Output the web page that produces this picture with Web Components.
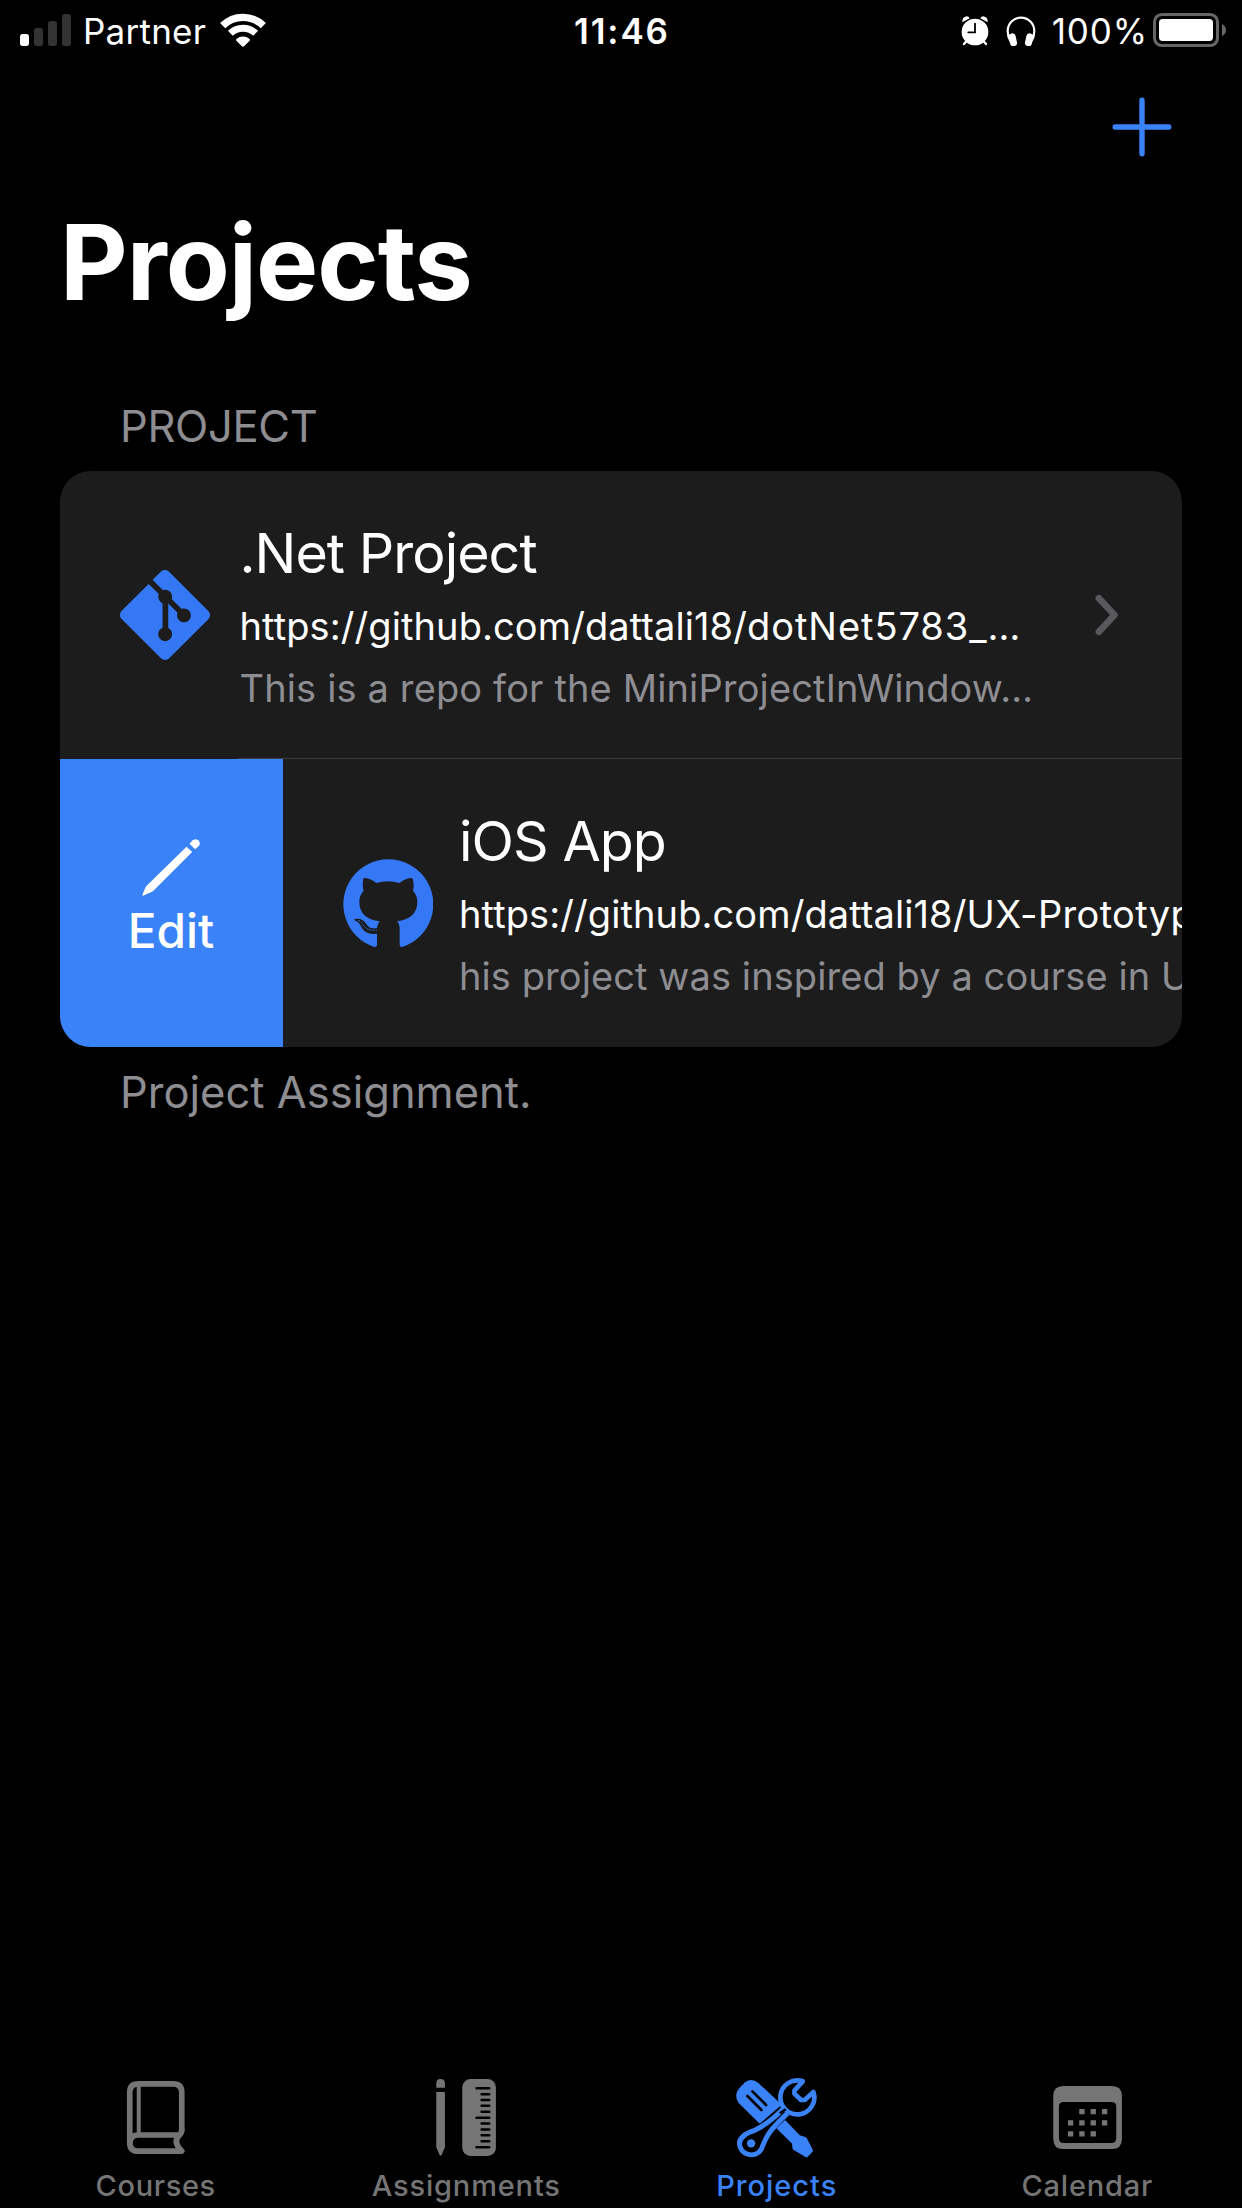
<!DOCTYPE html>
<html lang="en">
<head>
<meta charset="utf-8">
<title>Projects</title>
<style>
  html, body { margin: 0; background: #000; }
  body { font-family: Inter, "Liberation Sans", sans-serif; color: #fff; font-feature-settings: "calt" 0; }
</style>
</head>
<body>
<phone-screen>
  <status-bar slot="status" carrier="Partner" time="11:46" battery="100%"></status-bar>
  <nav-bar slot="nav">Projects</nav-bar>
  <list-section>
    <span slot="header">PROJECT</span>
    <project-row divider>
      <app-icon slot="icon" name="git"></app-icon>
      <span slot="name">.Net Project</span>
      <span slot="url">https://github.com/dattali18/<span style="letter-spacing:.95px">dotNet5783_…</span></span>
      <span slot="about" style="letter-spacing:.14px">This is a repo for the MiniProjectInWindow…</span>
    </project-row>
    <project-row swiped>
      <app-icon slot="icon" name="github"></app-icon>
      <span slot="name">iOS App</span>
      <span slot="url">https://github.com/dattali18/<span style="letter-spacing:.35px">UX-Prototyp</span></span>
      <span slot="about">his project was inspired by a course in U</span>
    </project-row>
    <span slot="footer">Project Assignment.</span>
  </list-section>
  <tab-bar slot="tabs">
    <tab-item icon="book" style="--ls:.65px">Courses</tab-item>
    <tab-item icon="ruler" style="--ls:.84px">Assignments</tab-item>
    <tab-item icon="tools" style="--ls:.99px" active>Projects</tab-item>
    <tab-item icon="calendar" style="--ls:.81px">Calendar</tab-item>
  </tab-bar>
</phone-screen>

<script>
const icons = {
  signal: `<svg width="51" height="32" viewBox="60 42 153 96"><rect x="60" y="102" width="27" height="36" rx="8" fill="#fff"/><g fill="#333"><rect x="102" y="84" width="27" height="54" rx="8"/><rect x="144" y="63" width="27" height="75" rx="8"/><rect x="186" y="42" width="27" height="96" rx="8"/></g></svg>`,
  wifi: `<svg width="46" height="34" viewBox="660 37 138 102"><g fill="none" stroke="#fff"><path stroke-width="22" d="M668 75A87 87 0 0 1 790 75"/><path stroke-width="21" d="M691 98A55 55 0 0 1 767 98"/></g><path fill="#fff" d="M725 136L709 120Q707 117 710 114A30 30 0 0 1 748 114Q751 117 749 120L733 136Q729 140 725 136Z"/></svg>`,
  alarm: `<svg width="28" height="30" viewBox="91 47 84 90"><circle cx="133" cy="95" r="40" fill="#fff"/><g fill="none" stroke="#fff" stroke-linecap="round"><path stroke-width="7" d="M107 123L100 131M159 123L166 131"/></g><path fill="#fff" d="M95 66Q94 50 108 48Q114 48 117 54ZM171 66Q172 50 158 48Q152 48 149 54Z"/><path d="M133 70V96H113" fill="none" stroke="#000" stroke-width="5.500" stroke-linecap="round"/></svg>`,
  headphones: `<svg width="30" height="30" viewBox="226 47 90 90"><path d="M239 122Q231 109 231 92A40 40 0 0 1 311 92Q311 109 303 122" fill="none" stroke="#fff" stroke-width="6.500"/><g fill="#fff"><rect x="236" y="99" width="21" height="39" rx="10" transform="rotate(-12 246 118)"/><rect x="285" y="99" width="21" height="39" rx="10" transform="rotate(12 296 118)"/></g></svg>`,
  battery: `<svg width="74" height="34" viewBox="669 39 222 102"><rect x="673.500" y="43.500" width="189" height="93" rx="22" fill="none" stroke="#666" stroke-width="9"/><rect x="687" y="57" width="162" height="66" rx="11" fill="#fff"/><path fill="#666" d="M876 72Q888 78 888 90Q888 102 876 109Z"/></svg>`,
  plus: `<svg width="60" height="60" viewBox="0 0 60 60"><path d="M30 3.200V56.800M3.200 30H56.800" stroke="#3a82f7" stroke-width="5.400" stroke-linecap="round"/></svg>`,
  git: `<svg width="90" height="90" viewBox="0 0 24 24"><path fill="#3478f6" d="M23.546 10.930L13.067.452c-.604-.603-1.582-.603-2.188 0L8.708 2.627l2.760 2.760c.645-.215 1.379-.070 1.889.441.516.515.658 1.258.438 1.900l2.658 2.660c.645-.223 1.387-.078 1.900.435.721.720.721 1.884 0 2.604-.719.719-1.881.719-2.600 0-.539-.541-.674-1.337-.404-1.996L12.860 8.955v6.525c.176.086.342.203.488.348.713.721.713 1.883 0 2.600-.719.721-1.889.721-2.609 0-.719-.719-.719-1.879 0-2.598.182-.180.387-.316.605-.406V8.835c-.217-.091-.424-.222-.600-.401-.545-.545-.676-1.342-.396-2.009L7.636 3.700.450 10.881c-.600.605-.600 1.584 0 2.189l10.480 10.477c.604.604 1.582.604 2.186 0l10.430-10.430c.605-.603.605-1.582 0-2.187"/></svg>`,
  github: `<svg width="90" height="90" viewBox="878 327 270 270"><path fill="#3478f6" d="M972 591A135 135 0 1 1 1056 591Q1048 592 1048 584V537Q1048 522 1040 514C1079 509 1101 490 1101 455Q1101 436 1088 422Q1093 404 1086 384Q1069 383 1047 399Q1012 389 978 399Q957 383 940 384Q934 404 940 422Q927 436 927 455C927 490 949 509 988 514Q981 522 980 534C964 538 954 532 948 522C940 508 926 504 914 507Q909 510 918 514C930 520 932 532 939 540C949 551 964 553 980 551V584Q980 592 972 591Z"/><path d="M925 512Q934 515 938 524Q947 542 979 541" fill="none" stroke="#3478f6" stroke-width="3" stroke-dasharray="3 6" stroke-linecap="round"/></svg>`,
  pencil: `<svg width="64" height="64" viewBox="268.500 255 192 192"><g fill="#fff"><path d="M408 290L425 306L308 423Q303 427 278 437Q276 437 276 434Q285 410 290 406Z"/><path d="M417 281L427 271Q435 264 443 271Q452 280 445 288L434 298Z"/></g></svg>`,
  chevron: `<svg width="24" height="42" viewBox="0 0 24 42"><path d="M3.900 4.200L19.500 21L3.900 37.800" fill="none" stroke="#59595d" stroke-width="6.600" stroke-linecap="round" stroke-linejoin="round"/></svg>`,
  book: `<svg width="96" height="84" viewBox="81.750 36 288 252"><g fill="none" stroke="currentColor" stroke-width="17"><path d="M306 214V97Q306 71.500 280 71.500H176Q150 71.500 150 97V248Q150 273.500 176 273.500H306"/><path d="M150 252Q150 225 176 225H300"/><path d="M306 210Q306 220 297 227Q279 247 306 273" stroke-linecap="round"/><path stroke-width="12" d="M177 72V224"/></g></svg>`,
  ruler: `<svg width="96" height="84" viewBox="173.250 36 288 252"><path fill="currentColor" d="M228 83V70Q228 57 241 57Q254 57 254 70V83ZM228 96H254V262L244 285Q241 290 238 285L228 262Z"/><rect x="306" y="57" width="101" height="231" rx="25" fill="currentColor"/><g stroke="#000" stroke-width="7.500" stroke-linecap="round"><path d="M349 85H387M349 173.500H387M349 261.500H387"/><path d="M364 102.500H387M364 120H387M364 137.500H387M364 155.500H387M364 190.500H387M364 208.500H387M364 226H387M364 243.500H387"/></g></svg>`,
  tools: `<svg width="96" height="84" viewBox="84.750 36 288 252" style="overflow:visible"><path fill="currentColor" d="M119 84L136 67Q155 52 175 68L246 134L180 191L116 128Q101 105 119 84Z"/><path d="M143 108L185 150M158 94L199 135" stroke="#000" stroke-width="8" stroke-linecap="round"/><path fill="currentColor" d="M230 205L256 180L300 226L316 231Q320 232 322 236L339 269Q341 273 338 276L324 290Q320 293 316 290L282 270Q278 267 278 263L277 251Z"/><path fill="#000" stroke="currentColor" stroke-width="15" stroke-linejoin="round" d="M252 145C222 176 200 194 165 211Q120 225 119 250A35.500 35.500 0 0 0 185 267C200 226 212 208 263 160"/><path fill="#000" stroke="currentColor" stroke-width="14" stroke-linejoin="round" d="M309 64L284 92V101L304 120H315L341 96A51 51 0 1 1 309 64Z"/><path d="M240 160L258 148" stroke="#000" stroke-width="7"/><circle cx="154" cy="250" r="12.500" fill="currentColor"/></svg>`,
  calendar: `<svg width="96" height="84" viewBox="86.250 36 288 252"><path fill="currentColor" fill-rule="evenodd" d="M159 78H305Q335 78 335 108V237Q335 267 305 267H159Q129 267 129 237V108Q129 78 159 78ZM160 126Q146 126 146 140V235Q146 249 160 249H304Q318 249 318 235V140Q318 126 304 126Z"/><g stroke="currentColor" stroke-width="16" stroke-dasharray="16 18"><path d="M207 155H292M173 188.500H292M173 221.500H258"/></g></svg>`
};

const define = (name, html, setup) => {
  const template = document.createElement('template');
  template.innerHTML = html;
  customElements.define(name, class extends HTMLElement {
    constructor() {
      super();
      this.attachShadow({ mode: 'open' }).append(template.content.cloneNode(true));
    }
    connectedCallback() { if (setup) setup(this, this.shadowRoot); }
  });
};

define('app-icon', `<style>:host{display:block;flex:none}svg{display:block}</style><div></div>`,
  (el, root) => { root.querySelector('div').innerHTML = icons[el.getAttribute('name')]; });

define('status-bar', `<style>
  :host{display:grid;grid-template-columns:1fr auto 1fr;align-items:center;height:62px;font-size:35px;line-height:42px}
  .left,.right{display:flex;align-items:center}
  .left{padding-left:20px}
  .carrier{margin:0 14px 0 12px;letter-spacing:.24px}
  .wifi{margin-top:-3px}
  .signal{margin-top:-2px}
  .time{font-weight:600;letter-spacing:1.9px;margin-right:-1.9px}
  .right{justify-content:flex-end;padding-right:15px}
  .alarm,.head{margin-top:-1px}
  .head{margin-left:17px}
  .pct{margin:0 5px 0 16px;letter-spacing:.9px}
  .batt{margin-top:-2px}
</style>
<div class="left"><app-icon class="signal" name="signal"></app-icon><span class="carrier"></span><app-icon class="wifi" name="wifi"></app-icon></div>
<span class="time"></span>
<div class="right"><app-icon class="alarm" name="alarm"></app-icon><app-icon class="head" name="headphones"></app-icon><span class="pct"></span><app-icon class="batt" name="battery"></app-icon></div>`,
  (el, root) => {
    root.querySelector('.carrier').textContent = el.getAttribute('carrier');
    root.querySelector('.time').textContent = el.getAttribute('time');
    root.querySelector('.pct').textContent = el.getAttribute('battery');
  });

define('nav-bar', `<style>
  :host{display:block}
  .actions{display:flex;justify-content:flex-end;align-items:center;height:129px;padding-right:70px}
  h1{margin:11px 0 0 60px;font-size:104.500px;line-height:120px;font-weight:700;letter-spacing:-1px}
</style><div class="actions"><app-icon name="plus"></app-icon></div><h1><slot></slot></h1>`);

define('list-section', `<style>
  :host{display:block;padding:77px 60px 0}
  .label{padding:0 60px;font-size:43.500px;line-height:54px;color:#8d8d92}
  .head{letter-spacing:-.350px}
  .card{margin:18px 0;border-radius:31px;overflow:hidden;background:#1c1c1d}
</style><div class="label head"><slot name="header"></slot></div><div class="card"><slot></slot></div><div class="label"><slot name="footer"></slot></div>`);

define('project-row', `<style>
  :host{display:flex;height:288px;overflow:hidden;background:linear-gradient(#3c3c3f,#3c3c3f) 178px 287px/0 1px no-repeat}
  :host([divider]){background-size:1000px 1px}
  swipe-action{display:none}
  :host([swiped]) swipe-action{display:flex}
  .cell{display:flex;align-items:center;flex:none;width:1122px;box-sizing:border-box;padding:0 63px 0 60px}
  .icon{flex:none;margin-right:29.500px}
  :host([swiped]) .cell{padding-left:59.500px}
  :host([swiped]) .icon{margin:2px 26.500px 0 0}
  .text{flex:1;min-width:0;white-space:nowrap;padding-top:2px}
  .name{font-size:55.500px;line-height:66px;letter-spacing:-.930px}
  .url{margin-top:15px;font-size:38px;line-height:50px;letter-spacing:.094px}
  .about{margin-top:12px;font-size:38px;line-height:50px;letter-spacing:.085px;color:#8d8d92}
  :host([swiped]) .chev{visibility:hidden}
</style>
<swipe-action>Edit</swipe-action>
<div class="cell">
  <div class="icon"><slot name="icon"></slot></div>
  <div class="text"><div class="name"><slot name="name"></slot></div><div class="url"><slot name="url"></slot></div><div class="about"><slot name="about"></slot></div></div>
  <app-icon class="chev" name="chevron"></app-icon>
</div>`);

define('swipe-action', `<style>
  :host{display:flex;flex:none;flex-direction:column;align-items:center;width:223px;box-sizing:border-box;padding-top:76px;background:#3a82f7}
  span{margin:3.500px 0 0 -1px;font-size:47.700px;line-height:56px;font-weight:500;letter-spacing:0}
</style><app-icon name="pencil"></app-icon><span><slot></slot></span>`);

define('tab-bar', `<style>:host{display:grid;grid-template-columns:repeat(4,1fr);height:136px}</style><slot></slot>`);

define('tab-item', `<style>
  :host{display:flex;flex-direction:column;align-items:center;color:#757575}
  :host([active]){color:#3a82f7}
  span{margin:13px 0 0 1px;font-size:29px;line-height:34px;font-weight:500;letter-spacing:var(--ls)}
</style><app-icon></app-icon><span><slot></slot></span>`,
  (el, root) => {
    const icon = root.querySelector('app-icon');
    icon.setAttribute('name', el.getAttribute('icon'));
    icon.shadowRoot.querySelector('div').innerHTML = icons[el.getAttribute('icon')];
  });

define('phone-screen', `<style>
  :host{display:flex;flex-direction:column;width:1242px;height:2208px;overflow:hidden;background:#000}
  main{flex:1;min-height:0}
</style><slot name="status"></slot><slot name="nav"></slot><main><slot></slot></main><slot name="tabs"></slot>`);
</script>
</body>
</html>
